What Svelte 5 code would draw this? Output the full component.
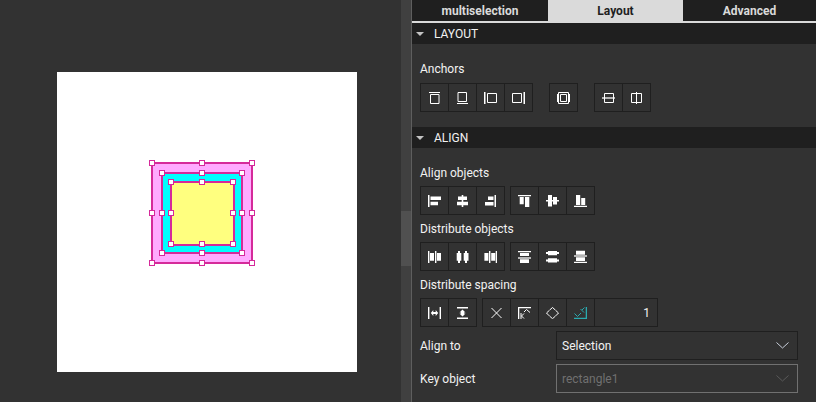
<script>
  const tabs = ['multiselection', 'Layout', 'Advanced'];
  let active = $state('Layout');
  let distance = $state('1');

  // Each icon is drawn on a 13 x 13 grid: f = filled shapes, dim = grey shapes, s = stroked lines.
  const anchors = [
    [
      { name: 'Anchor top', f: 'M1 1h11v1H1z', s: 'M2.5 3.5h8.5v9h-8.5z' },
      { name: 'Anchor bottom', f: 'M1 12h11v1H1z', s: 'M2 1.5h8.5v9h-8.5z' },
      { name: 'Anchor left', f: 'M0 1h1.5v12H0z', s: 'M3.5 2.5h9v9h-9z' },
      { name: 'Anchor right', f: 'M11.5 1H13v12h-1.5z', s: 'M.5 2.5h9v9h-9z' }
    ],
    [{ name: 'Fill parent', f: 'M0 3h1v8H0zM12 3h1v8h-1z', s: 'M1.5 1.5h10v11h-10zM3.5 3.5h6v7h-6z' }],
    [
      { name: 'Center vertically', dim: 'M0 6h13v2H0z', s: 'M2.5 2.5h9v9h-9z' },
      { name: 'Center horizontally', f: 'M6 1h1v12H6z', s: 'M1.5 2.5h10v9h-10z' }
    ]
  ];

  const align = [
    [
      { name: 'Align left edges', f: 'M0 1h1.5v12H0zM2.500 2.500H13V6H2.500zM2.500 7.700h7.500v3.500h-7.500z' },
      { name: 'Align horizontal centers', f: 'M5.700 1h1.600v12H5.700zM2 2.500h9V6H2zM1 7.700h11v3.500H1z' },
      { name: 'Align right edges', f: 'M10.500 1H12v12h-1.500zM4 2.500h5.500V6H4zM1 8h8.500v3.500H1z' }
    ],
    [
      { name: 'Align top edges', f: 'M0 1h13v1.300H0zM1.700 3h4v7.300h-4zM7 3h4.300v10H7z' },
      { name: 'Align vertical centers', f: 'M0 6h13v1.500H0zM2 1h4v11.500H2zM7 3h4v7.500H7z' },
      { name: 'Align bottom edges', f: 'M0 11.700h13V13H0zM2 1h4.200v10H2zM7.200 4h4v7h-4z' }
    ]
  ];

  const distribute = [
    [
      { name: 'Distribute left edges', f: 'M0 1h1.400v12H0zM2 3h4v7.700H2zM7 1h1.400v12H7zM9 3h4v7.700H9z' },
      { name: 'Distribute horizontal centers', f: 'M.7 3h4.600v7.700H.7zM7.700 3h4.800v7.700H7.700zM2 1h2v12H2zM9 1h2v12H9z' },
      { name: 'Distribute right edges', f: 'M.4 3h4v7.700h-4zM5 1h1.400v12H5zM7.200 3h4v7.700h-4zM11.700 1H13v12h-1.300z' }
    ],
    [
      { name: 'Distribute top edges', f: 'M0 1h13v1.300H0zM2 3h9v3H2zM2 9.300h9V13H2z', dim: 'M0 7h13v2H0z' },
      { name: 'Distribute vertical centers', f: 'M2 1h9v4.300H2zM0 2h13v2H0zM2 8.300h9v4.300H2zM0 9.500h13v2H0z' },
      { name: 'Distribute bottom edges', f: 'M2 .7h9v4H2zM2 7.300h9V11H2zM0 11.700h13V13H0z', dim: 'M0 5h13v2H0z' }
    ]
  ];

  const spacing = [
    [
      { name: 'Distribute spacing horizontally', f: 'M0 1h1.400v12H0zM11.600 1H13v12h-1.400zM2.800 7l2.500-3v2h2.400V4l2.500 3-2.500 3V8H5.300v2z' },
      { name: 'Distribute spacing vertically', f: 'M1 1h11v1.500H1zM1 11.500h11V13H1zM6.500 3.500l3 3H8v1h1.500l-3 3-3-3H5v-1H3.500z' }
    ],
    [
      { name: 'No origin', s: 'M1.500 2L11.500 12M11.500 2L1.500 12' },
      { name: 'Origin top left', f: 'M0 1h13v1.300H0zM0 1h1.300v12H0z', s: 'M3 7v6M6 7.500L3.500 10L6 12.500M6 6L8.500 3.500L12 6.500' },
      { name: 'Origin center', s: 'M3.500 4.200L6.500 1.500L9.500 4.200M9.800 4.500L12.500 7L9.800 9.800M9.500 10L6.500 12.700L3.500 10M3.200 9.800L.5 7L3.200 4.500' },
      { name: 'Origin bottom right', on: true, f: 'M0 11.700h13V13H0zM11.700 1H13v12h-1.300z', s: 'M.5 7.500L3.500 10.500L7 7M6.500 3L10 6.500M10.500 1.500L8 4' }
    ]
  ];

  const frames = [
    { x1: 152, y1: 163, x2: 252, y2: 263, hx: 252, hy: 263, fill: '#ffaaff' },
    { x1: 162, y1: 173, x2: 242, y2: 253, hx: 242, hy: 253, fill: '#00ffff' },
    { x1: 171, y1: 182, x2: 234, y2: 245, hx: 233, hy: 244, fill: '#ffff7f' }
  ];
  const handles = (r) => [
    [r.x1, r.y1], [202, r.y1], [r.hx, r.y1],
    [r.x1, 213], [r.hx, 213],
    [r.x1, r.hy], [202, r.hy], [r.hx, r.hy]
  ];
</script>

{#snippet cells(icons)}
  {#each icons as icon}
    <button class="tool" class:on={icon.on} aria-label={icon.name}>
      <svg width="13" height="13" viewBox="0 0 13 13" aria-hidden="true">
        {#if icon.dim}<path class="dim" d={icon.dim} />{/if}
        {#if icon.f}<path class="fill" d={icon.f} />{/if}
        {#if icon.s}<path class="line" d={icon.s} />{/if}
      </svg>
    </button>
  {/each}
{/snippet}

{#snippet row(groups)}
  {#each groups as icons}
    <div class="group">{@render cells(icons)}</div>
  {/each}
{/snippet}

{#snippet arrow()}
  <svg width="8" height="5" viewBox="0 0 8 5" aria-hidden="true"><path d="M0 1h8L4 5z" fill="#c4c4c4" /></svg>
{/snippet}

<div class="app">
  <main class="canvas">
    <svg class="artboard" viewBox="57 72 300 300" role="img" aria-label="Three selected rectangles">
      <rect x="57" y="72" width="300" height="300" fill="#fff" />
      {#each frames as r}
        <rect x={r.x1} y={r.y1} width={r.x2 - r.x1} height={r.y2 - r.y1} fill={r.fill} stroke="#d52a9a" stroke-width="2" />
      {/each}
      {#each frames as r}
        {#each handles(r) as [x, y]}
          <rect x={x - 2.5} y={y - 2.5} width="5" height="5" fill="#fff" stroke="#d52a9a" />
        {/each}
      {/each}
    </svg>
  </main>

  <div class="scroll"><div class="thumb"></div></div>

  <aside class="panel">
    <div class="tabs" role="tablist">
      {#each tabs as tab}
        <button role="tab" class="tab" class:active={active === tab} aria-selected={active === tab} onclick={() => (active = tab)}>{tab}</button>
      {/each}
    </div>

    <section>
      <button class="head">{@render arrow()}LAYOUT</button>
      <div class="body">
        <div class="label">Anchors</div>
        <div class="tools wide">{@render row(anchors)}</div>
      </div>
    </section>

    <section>
      <button class="head">{@render arrow()}ALIGN</button>
      <div class="body">
        <div class="label">Align objects</div>
        <div class="tools">{@render row(align)}</div>
        <div class="label next">Distribute objects</div>
        <div class="tools">{@render row(distribute)}</div>
        <div class="label next">Distribute spacing</div>
        <div class="tools">
          <div class="group">{@render cells(spacing[0])}</div>
          <div class="group">
            {@render cells(spacing[1])}
            <input class="amount" aria-label="Spacing" bind:value={distance} />
          </div>
        </div>
        <div class="field">
          <label for="align-to">Align to</label>
          <div class="pick">
            <select id="align-to"><option>Selection</option></select>
            <svg width="13" height="7" viewBox="0 0 13 7" aria-hidden="true"><path d="M.5 .5l6 5.500 6-5.500" /></svg>
          </div>
        </div>
        <div class="field">
          <label for="key-object">Key object</label>
          <div class="pick off">
            <select id="key-object" disabled><option>rectangle1</option></select>
            <svg width="13" height="7" viewBox="0 0 13 7" aria-hidden="true"><path d="M.5 .5l6 5.500 6-5.500" /></svg>
          </div>
        </div>
      </div>
    </section>
  </aside>
</div>

<style>
  :global(body) { margin: 0; background: #323232; }
  .app {
    display: grid;
    grid-template-columns: 401fr 10px 405fr;
    min-height: 100vh;
    background: #323232;
    color: #f2f2f2;
    font: 12px/16px Roboto, "Open Sans", sans-serif;
  }
  button, input, select {
    margin: 0;
    padding: 0;
    border: 0;
    border-radius: 0;
    background: none;
    color: inherit;
    font: inherit;
    box-sizing: border-box;
  }
  svg { display: block; flex: none; }

  .canvas { padding: 72px 44px 0 57px; }
  .artboard { width: 100%; height: auto; }

  .scroll { background: #404040; }
  .thumb { height: 55px; margin-top: 211px; background: #505050; }

  .panel { border-left: 1px solid #5e5e5e; min-width: 0; }
  .tabs {
    display: grid;
    grid-template-columns: 136fr 135fr 133fr;
    border-bottom: 2px solid #dadada;
    background: #1f1f1f;
  }
  .tab { height: 21px; font-weight: 700; color: #dadada; }
  .tab.active { background: #dadada; color: #1f1f1f; }

  .head {
    display: flex;
    align-items: center;
    gap: 10px;
    width: 100%;
    height: 21px;
    padding-left: 4px;
    background: #1f1f1f;
  }
  .body { padding: 17px 18px 15px 8px; }
  .label { margin-bottom: 5px; }
  .label.next { margin-top: 6px; }
  .tools { display: flex; gap: 5px; }
  .tools.wide { gap: 16px; margin-top: 6px; }
  .group {
    display: flex;
    height: 29px;
    box-sizing: border-box;
    border: 1px solid #1f1f1f;
  }
  .tool { display: grid; place-items: center; width: 27px; color: #fff; }
  .tool + .tool, .amount { border-left: 1px solid #1f1f1f; width: 28px; }
  .tool.on { color: #2aaaaf; }
  .fill { fill: currentColor; }
  .dim { fill: #b4b4b4; }
  .line { fill: none; stroke: currentColor; }
  .amount { width: 63px; padding-right: 7px; text-align: right; }

  .field {
    display: grid;
    grid-template-columns: 136px 1fr;
    align-items: center;
    margin-top: 4px;
  }
  .pick { display: grid; align-items: center; border: 1px solid #1f1f1f; }
  .pick > * { grid-area: 1 / 1; }
  .pick select { appearance: none; width: 100%; height: 27px; padding-left: 5px; opacity: 1; }
  .pick svg { justify-self: end; margin-right: 8px; pointer-events: none; }
  .pick path { fill: none; stroke: #c9d0dc; }
  .pick.off { border-color: #707070; color: #707070; }
  .pick.off path { stroke: #5a5a5a; }
</style>
